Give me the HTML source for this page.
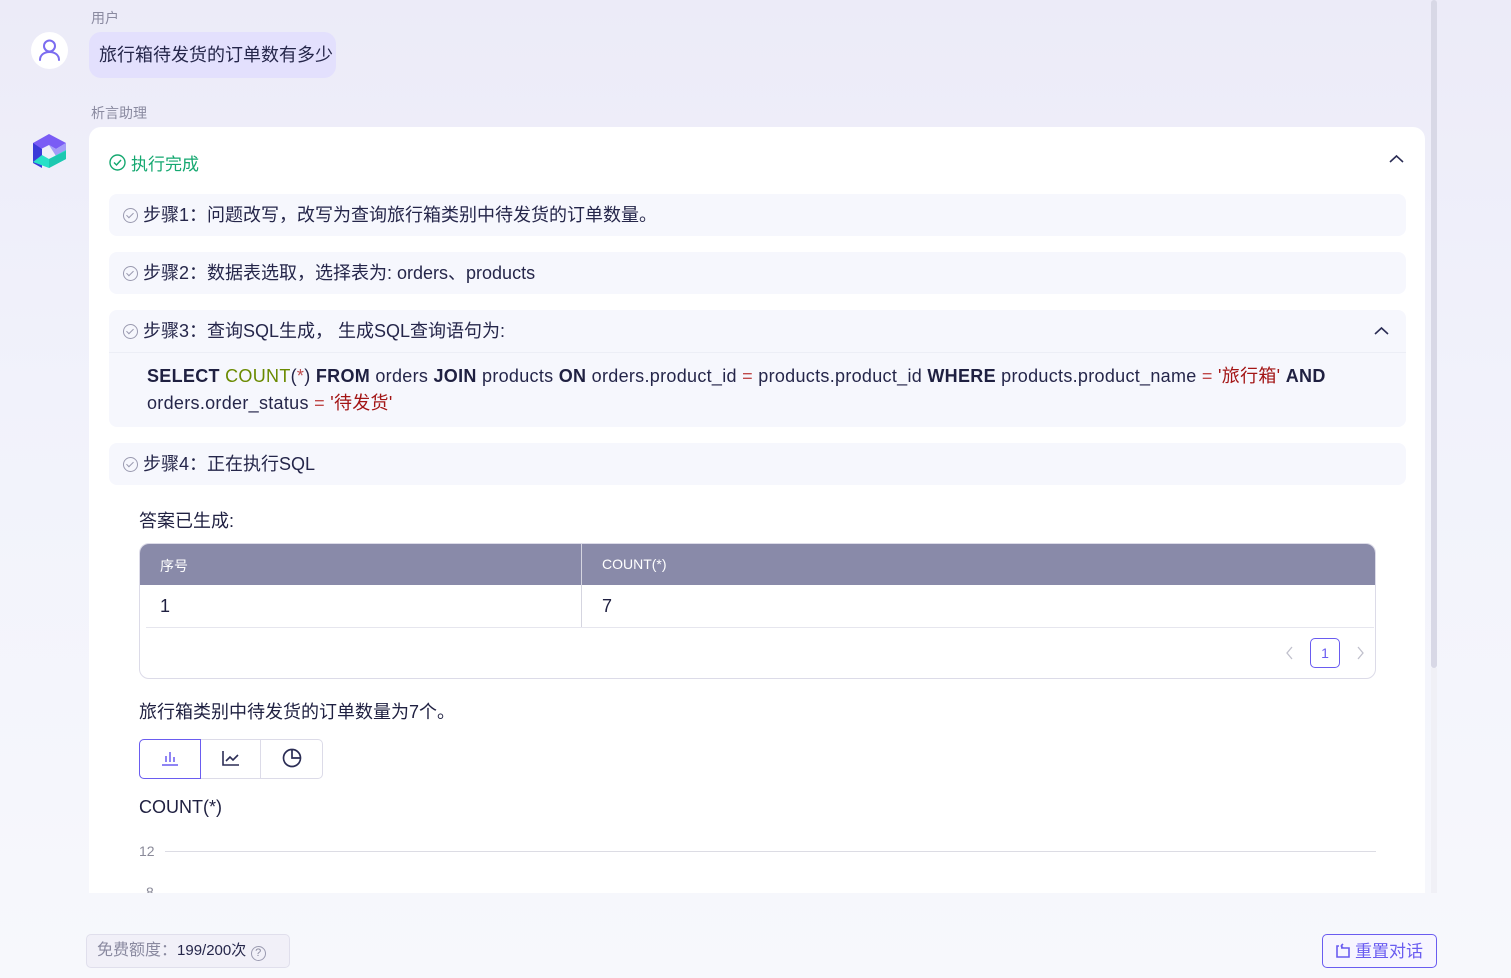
<!DOCTYPE html>
<html><head><meta charset="utf-8"><style>
*{box-sizing:border-box;margin:0;padding:0}
body{width:1511px;height:978px;overflow:hidden;position:relative;font-family:"Liberation Sans","Noto Sans CJK SC",sans-serif;color:#1f2041;background:linear-gradient(180deg,#ecebf8 0%,#f1f2fb 40%,#f7f8fc 100%)}
.abs{position:absolute}
.lbl{font-size:14px;color:#8a8aa0}
.step{position:absolute;left:109px;width:1297px;background:#f6f7fd;border-radius:8px;font-size:18px;color:#25264a}
.step .t{position:absolute;left:14px;top:0;height:42px;line-height:42px;display:flex;align-items:center;gap:5px}
.ck{width:15px;height:15px;border:1.3px solid #9a9ab0;border-radius:50%;position:relative;display:inline-block}
.ck:after{content:"";position:absolute;left:4px;top:2px;width:3px;height:6px;border:solid #9a9ab0;border-width:0 1.3px 1.3px 0;transform:rotate(45deg)}
b{font-weight:bold;color:#1f2041}
.fn{color:#6a8a00}
.op{color:#c04a4a}
.st{color:#a31515}
</style></head><body>
<div class="abs lbl" style="left:91px;top:8px">用户</div>
<div class="abs" style="left:31px;top:32px;width:37px;height:37px;border-radius:50%;background:#fff">
<svg width="37" height="37" viewBox="0 0 37 37"><circle cx="18.5" cy="14" r="5.5" fill="none" stroke="#7b6cf0" stroke-width="2"/><path d="M9 28c0-5 4-8 9.5-8s9.5 3 9.5 8" fill="none" stroke="#7b6cf0" stroke-width="2" stroke-linecap="round"/></svg></div>
<div class="abs" style="left:89px;top:32px;width:247px;height:46px;border-radius:12px;background:#e3e0fd;font-size:18px;line-height:46px;padding-left:10px;color:#25264a">旅行箱待发货的订单数有多少</div>
<div class="abs lbl" style="left:91px;top:103px">析言助理</div>
<svg class="abs" style="left:32px;top:133px" width="36" height="40" viewBox="0 0 36 40"><path d="M1 10L17 1l17 9-10 6L17 12 1 20z" fill="#7a5cf5"/><path d="M17 12l7 4 10-6v8l-10 5z" fill="#a49cf8"/><path d="M1 10v20l9 5V16z" fill="#3a3ad8"/><path d="M10 22l7 4 17-9v9L17 35l-16-6z" fill="#28e0c8"/><path d="M17 26v9l17-9v-8z" fill="#1cc8b0"/></svg>
<div class="abs" style="left:89px;top:127px;width:1336px;height:766px;background:#fff;border-radius:12px 12px 0 0"></div>
<div class="abs" style="left:109px;top:150px;font-size:17px;color:#15a870;display:flex;align-items:center;gap:5px"><svg width="17" height="17" viewBox="0 0 17 17"><circle cx="8.5" cy="8.5" r="7.5" fill="none" stroke="#15a870" stroke-width="1.4"/><path d="M5 8.5l2.5 2.5 4.5-5" fill="none" stroke="#15a870" stroke-width="1.4"/></svg>执行完成</div>
<svg class="abs" style="left:1389px;top:154px" width="15" height="10"><path d="M1 8l6.5-6 6.5 6" fill="none" stroke="#2b2d55" stroke-width="1.6"/></svg>
<div class="step" style="top:194px;height:42px"><div class="t"><span class="ck"></span>步骤1：问题改写，改写为查询旅行箱类别中待发货的订单数量。</div></div>
<div class="step" style="top:252px;height:42px"><div class="t"><span class="ck"></span>步骤2：数据表选取，选择表为: orders、products</div></div>
<div class="step" style="top:310px;height:117px"><div class="t"><span class="ck"></span>步骤3：查询SQL生成， 生成SQL查询语句为:</div>
<svg class="abs" style="left:1265px;top:16px" width="15" height="10"><path d="M1 8l6.5-6 6.5 6" fill="none" stroke="#2b2d55" stroke-width="1.6"/></svg>
<div class="abs" style="left:0;top:42px;width:100%;border-top:1px solid #eceef6"></div>
<div class="abs" style="left:38px;top:53px;font-size:18px;line-height:27px;color:#25264a;width:1250px;letter-spacing:0.3px"><b>SELECT</b> <span class="fn">COUNT</span>(<span class="op">*</span>) <b>FROM</b> orders <b>JOIN</b> products <b>ON</b> orders.product_id <span class="op">=</span> products.product_id <b>WHERE</b> products.product_name <span class="op">=</span> <span class="st">'旅行箱'</span> <b>AND</b><br>orders.order_status <span class="op">=</span> <span class="st">'待发货'</span></div></div>
<div class="step" style="top:443px;height:42px"><div class="t"><span class="ck"></span>步骤4：正在执行SQL</div></div>
<div class="abs" style="left:139px;top:507px;font-size:18px">答案已生成:</div>
<div class="abs" style="left:139px;top:543px;width:1237px;height:136px;border:1px solid #dcdbe8;border-radius:10px;overflow:hidden">
<div class="abs" style="left:0;top:0;width:1235px;height:41px;background:#898aa9"></div>
<div class="abs" style="left:441px;top:0;width:1px;height:84px;background:#d5d5e0"></div>
<div class="abs" style="left:20px;top:12px;font-size:14px;color:#fff">序号</div>
<div class="abs" style="left:462px;top:12px;font-size:14px;color:#fff">COUNT(*)</div>
<div class="abs" style="left:20px;top:52px;font-size:18px">1</div>
<div class="abs" style="left:462px;top:52px;font-size:18px">7</div>
<div class="abs" style="left:6px;top:83px;width:1228px;border-top:1px solid #e6e6ee"></div>
<svg class="abs" style="left:1145px;top:102px" width="10" height="14"><path d="M7 1L2 7l5 6" fill="none" stroke="#c0c0cc" stroke-width="1.3"/></svg>
<div class="abs" style="left:1170px;top:94px;width:30px;height:30px;border:1.3px solid #6a5cf0;border-radius:5px;font-size:14px;text-align:center;line-height:28px;color:#6a5cf0">1</div>
<svg class="abs" style="left:1215px;top:102px" width="10" height="14"><path d="M3 1l5 6-5 6" fill="none" stroke="#c0c0cc" stroke-width="1.3"/></svg>
</div>
<div class="abs" style="left:139px;top:698px;font-size:18px">旅行箱类别中待发货的订单数量为7个。</div>
<div class="abs" style="left:139px;top:739px;width:184px;height:40px;border:1px solid #dcdbe8;border-radius:5px"></div>
<div class="abs" style="left:200px;top:740px;width:1px;height:38px;background:#dcdbe8"></div>
<div class="abs" style="left:260px;top:740px;width:1px;height:38px;background:#dcdbe8"></div>
<div class="abs" style="left:139px;top:739px;width:62px;height:40px;border:1px solid #6a5cf0;border-radius:5px 0 0 5px"></div>
<svg class="abs" style="left:160px;top:749px" width="20" height="18"><path d="M2 16h16M6 13V7M10 13V3M14 13V8" stroke="#6a5cf0" stroke-width="1.5" fill="none"/></svg>
<svg class="abs" style="left:221px;top:749px" width="20" height="18"><path d="M2 2v14h16M5 12l4-4 3 3 5-5" stroke="#2b2d55" stroke-width="1.6" fill="none"/></svg>
<svg class="abs" style="left:281px;top:747px" width="22" height="22"><circle cx="11" cy="11" r="8.5" stroke="#2b2d55" stroke-width="1.7" fill="none"/><path d="M11 2.5V11h8.5" stroke="#2b2d55" stroke-width="1.7" fill="none"/></svg>
<div class="abs" style="left:139px;top:797px;font-size:18px">COUNT(*)</div>
<div class="abs" style="left:139px;top:843px;font-size:14px;color:#8a8a99">12</div>
<div class="abs" style="left:165px;top:851px;width:1211px;border-top:1px solid #dcdce4"></div>
<div class="abs" style="left:146px;top:885px;font-size:14px;color:#8a8a99;height:8px;overflow:hidden;line-height:14px">8</div>
<div class="abs" style="left:1431px;top:0;width:6px;height:668px;background:#d8d8e6;border-radius:3px"></div>
<div class="abs" style="left:1431px;top:668px;width:6px;height:225px;background:#f0f0f6"></div>
<div class="abs" style="left:86px;top:934px;width:204px;height:34px;border:1px solid #e0dfec;border-radius:5px;background:#f1f0f8;font-size:16px;line-height:32px;padding-left:10px;color:#8a8aa0">免费额度：<span style="color:#25264a;font-size:15px">199/200次</span> <span style="display:inline-block;width:15px;height:15px;border:1.2px solid #9a9ab0;border-radius:50%;font-size:11px;line-height:13px;text-align:center;vertical-align:-1px">?</span></div>
<div class="abs" style="left:1322px;top:934px;width:115px;height:34px;border:1.3px solid #6a5cf0;border-radius:5px;background:#f7f5ff;font-size:17px;line-height:31px;color:#6a5cf0;padding-left:12px;display:flex;align-items:center;gap:4px"><svg width="16" height="16"><path d="M4 3H2v11h12V5H6M6 3l2-2M6 3l2 2" stroke="#6a5cf0" stroke-width="1.6" fill="none"/></svg>重置对话</div>
</body></html>
